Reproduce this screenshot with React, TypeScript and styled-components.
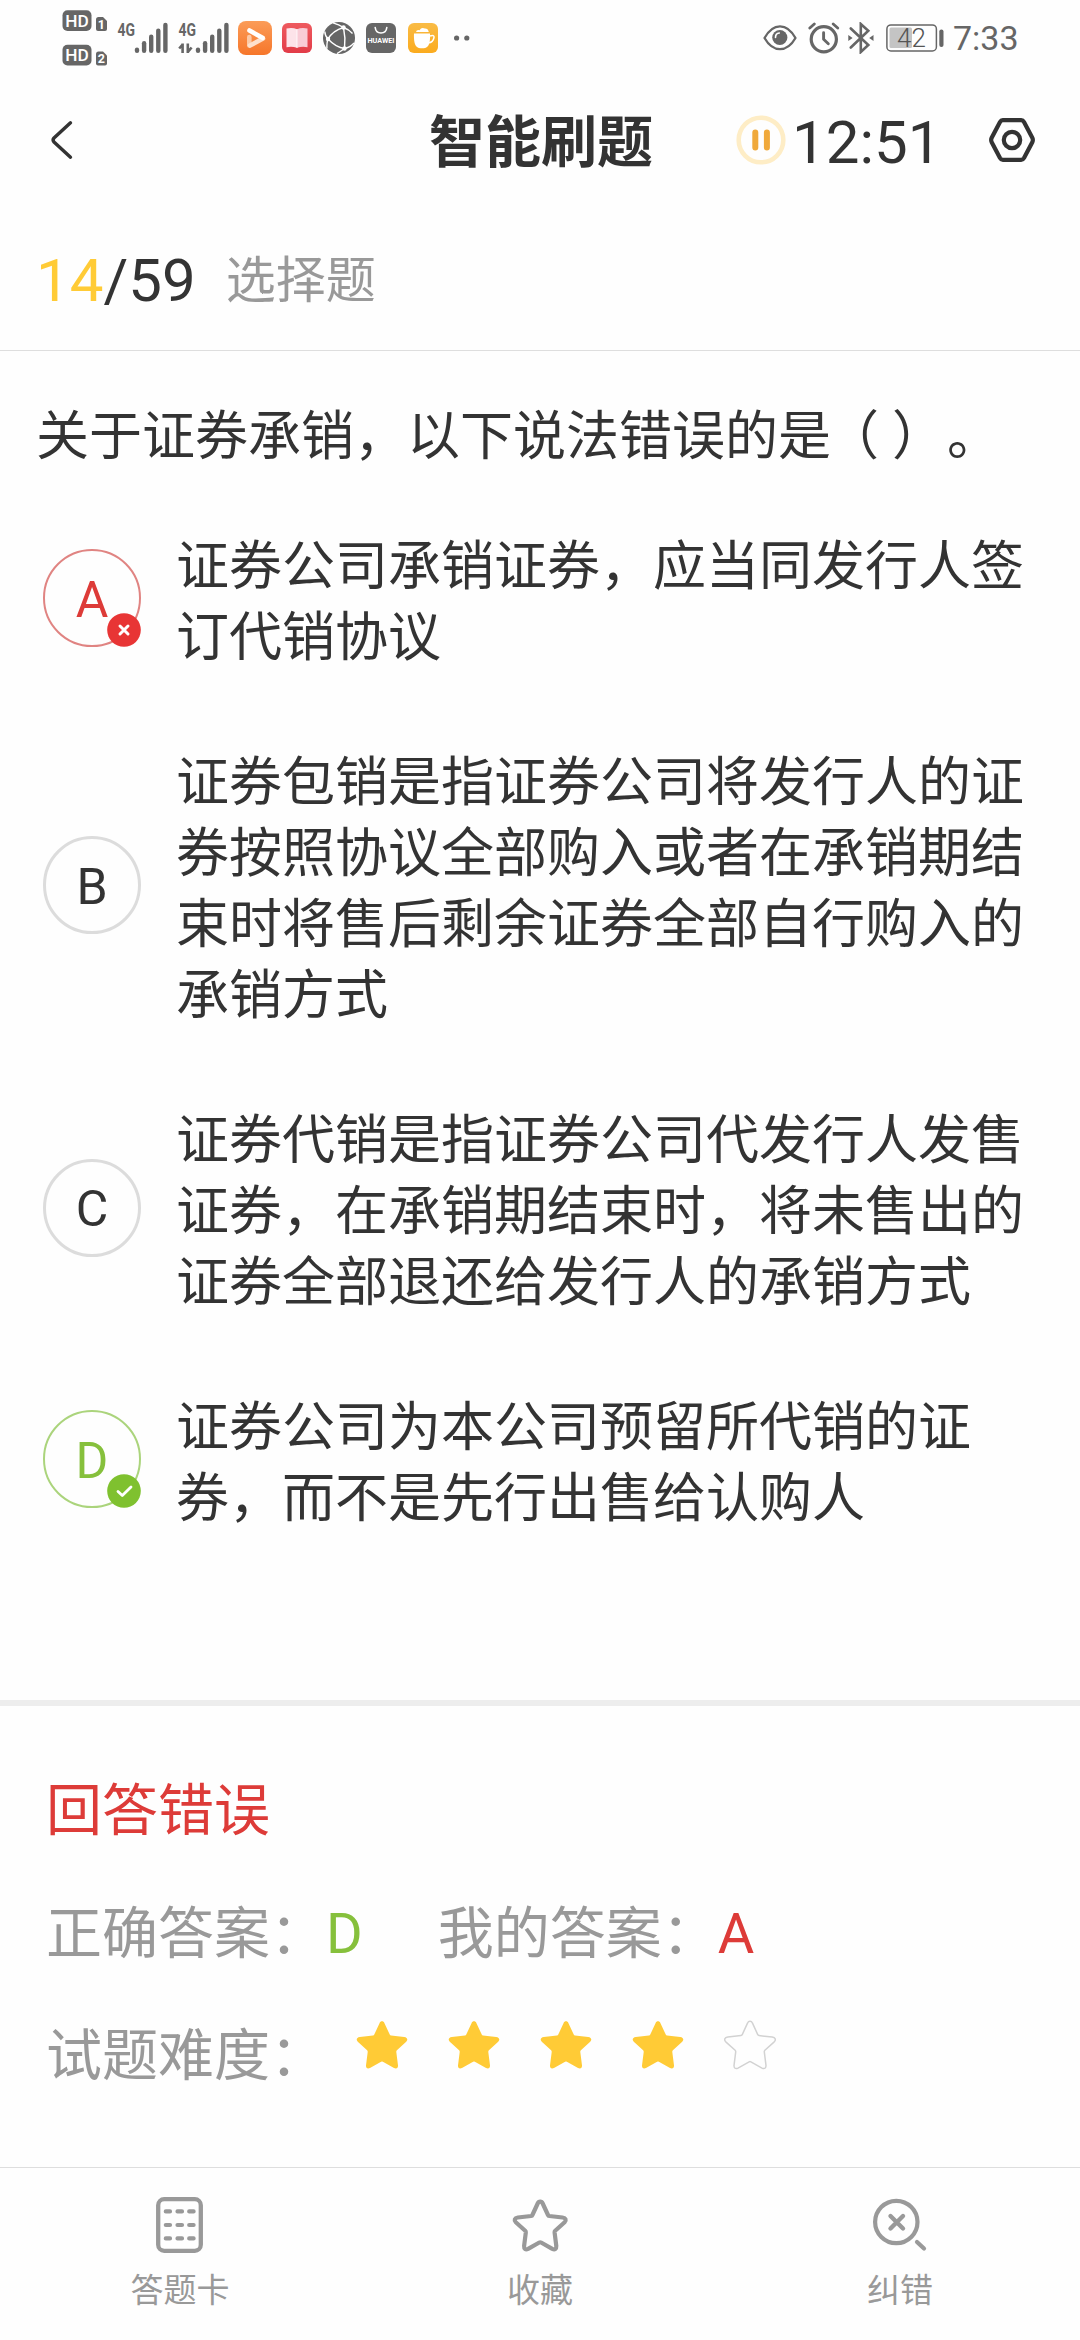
import React from "react";
import styled, { createGlobalStyle } from "styled-components";

const INK = "#333333";
const MUTED = "#999999";
const STATUS = "#666666";
const RED = "#dd3b38";
const GREEN = "#86c03c";
const YELLOW = "#ffcb36";
const FONT = `Roboto, "Noto Sans CJK SC", sans-serif`;

const GlobalStyle = createGlobalStyle`
  * { box-sizing: border-box; }
  body { margin: 0; background: #fefefe; }
`;

const Screen = styled.main`
  width: 1080px;
  height: 2340px;
  display: flex;
  flex-direction: column;
  overflow: hidden;
  background: #fefefe;
  color: ${INK};
  font-family: ${FONT};
  text-spacing-trim: space-all;
`;

/* ---------- status bar ---------- */

const StatusBar = styled.div`
  height: 75px;
  flex: none;
  display: flex;
  align-items: center;
  justify-content: space-between;
  padding: 0 61px 0 62px;
  color: ${STATUS};
`;

const StatusGroup = styled.div`
  display: flex;
  align-items: center;
`;

const Slot = styled.span<{ $gap?: number }>`
  display: flex;
  margin-left: ${(p) => p.$gap ?? 0}px;
  svg { display: block; }
`;

const Clock = styled.span`
  margin-left: 8px;
  font-size: 34px;
  line-height: 40px;
  width: 66px;
  white-space: nowrap;
`;

function HdBadges() {
  return (
    <svg width="46" height="56" viewBox="0 0 46 56" fontFamily={FONT}>
      {[0, 34.5].map((y, i) => (
        <g key={y} transform={`translate(0 ${y})`}>
          <rect x="0.5" y="0.3" width="29" height="20.6" rx="5" fill={STATUS} />
          <text x="15" y="16.6" fontSize="17" fontWeight="500" fill="#fff" textAnchor="middle" textLength="23.5" lengthAdjust="spacingAndGlyphs">HD</text>
          <path d="M34 9.5 Q34 7 36.5 7 H41 L45 11 V19 Q45 21 43 21 H36 Q34 21 34 19Z" fill={STATUS} />
          <text x="39.4" y="18.6" fontSize="12.5" fontWeight="700" fill="#fff" textAnchor="middle">{i + 1}</text>
        </g>
      ))}
    </svg>
  );
}

function Signal({ data }: { data?: boolean }) {
  return (
    <svg width="51" height="42" viewBox="0 -6 51 42" fill={STATUS} fontFamily={FONT}>
      <text x="0.5" y="13.3" fontSize="18.5" fontWeight="700" textLength="17.5" lengthAdjust="spacingAndGlyphs">4G</text>
      {[5.5, 12, 18.5, 24.5, 30.2].map((h, i) => (
        <rect key={h} x={17.8 + i * 7.1} y={30 - h} width="4.4" height={h} rx="2.2" />
      ))}
      {data && (
        <path d="M4.6 20.5 V30 M4.6 21.5 L1.2 25.5 M9.8 20.5 V30 M9.8 29 L13.6 24.5" stroke={STATUS} strokeWidth="2.6" fill="none" />
      )}
    </svg>
  );
}

function VideoApp() {
  return (
    <svg width="34" height="34" viewBox="0 0 34 34">
      <defs>
        <linearGradient id="video" x1="0" y1="0" x2="0" y2="1">
          <stop offset="0" stopColor="#fb9c58" />
          <stop offset="1" stopColor="#f6762a" />
        </linearGradient>
      </defs>
      <rect width="34" height="34" rx="8" fill="url(#video)" />
      <path d="M11.3 16 V24.5" stroke="#fcc9a5" strokeWidth="4.6" strokeLinecap="round" />
      <path d="M12 24.5 L25 17.5" stroke="#fde0cc" strokeWidth="4.6" strokeLinecap="round" />
      <path d="M11.5 9.5 L24.5 16.8" stroke="#fff" strokeWidth="4.6" strokeLinecap="round" />
    </svg>
  );
}

function BookApp() {
  return (
    <svg width="30" height="30" viewBox="0 0 30 30">
      <defs>
        <linearGradient id="book" x1="0" y1="0" x2="0" y2="1">
          <stop offset="0" stopColor="#ee5a5f" />
          <stop offset="1" stopColor="#e23c48" />
        </linearGradient>
      </defs>
      <rect width="30" height="30" rx="6" fill="url(#book)" />
      <path d="M4.5 5.5 Q10.5 4 15 6.3 V24.8 Q10 23.2 4.5 24.3Z" fill="#fde3e9" />
      <path d="M15 6.3 Q19.5 4 25.5 5.5 V24.3 Q20 23.2 15 24.8Z" fill="#f9ccd6" />
      <path d="M15 6 V25" stroke="#fff" strokeWidth="0.8" />
    </svg>
  );
}

function GlobeApp() {
  return (
    <svg width="32" height="32" viewBox="0 0 32 32">
      <circle cx="16" cy="16" r="16" fill={STATUS} />
      <g fill="none" stroke="#fff" strokeWidth="1.4">
        <path d="M10 0.9 Q16 2.5 20.5 5.5 Q26 7.5 29.5 11.5" />
        <path d="M20.5 5.5 Q10 8.5 5 17 Q13 25.5 21.5 26.5 Q22.8 16 20.5 5.5Z" />
        <path d="M5 17 Q2 14 1.8 9.5 M5 17 Q3.5 21.5 4 26.5 M21.5 26.5 Q17.5 29.5 14 31.5 M21.5 26.5 Q27 25.5 31 21" />
      </g>
      <g fill="#fff">
        <circle cx="20.5" cy="5.5" r="2.2" />
        <circle cx="5" cy="17" r="2.2" />
        <circle cx="21.5" cy="26.5" r="2.2" />
      </g>
    </svg>
  );
}

function StoreApp() {
  return (
    <svg width="30" height="30" viewBox="0 0 30 30">
      <rect width="30" height="30" rx="6" fill={STATUS} />
      <path d="M9.2 4.5 Q9.8 10 15 10 Q20.2 10 20.8 4.5" fill="none" stroke="#fff" strokeWidth="1.6" strokeLinecap="round" />
      <text x="15" y="20" fontSize="7" fontWeight="700" fontFamily={FONT} fill="#fff" textAnchor="middle" textLength="27" lengthAdjust="spacingAndGlyphs">HUAWEI</text>
    </svg>
  );
}

function CupApp() {
  return (
    <svg width="30" height="30" viewBox="0 0 30 30">
      <defs>
        <linearGradient id="cup" x1="0" y1="0" x2="0" y2="1">
          <stop offset="0" stopColor="#f9bb45" />
          <stop offset="1" stopColor="#fbab1e" />
        </linearGradient>
      </defs>
      <rect width="30" height="30" rx="6" fill="url(#cup)" />
      <path d="M6 10.5 H22 Q22.8 25.3 15.5 25.3 H12.5 Q5.2 25.3 6 10.5Z" fill="#fff" />
      <path d="M22 13 Q26.5 11.5 26 14.5 Q25 19.5 20.5 19.8" fill="none" stroke="#fff" strokeWidth="1.5" />
      <path d="M8 9 Q8.5 6.5 11.5 7.2 Q13.5 3.8 17 5.6 Q20 5.5 20.8 9Z" fill="#fff" />
    </svg>
  );
}

function MoreDots() {
  return (
    <svg width="16" height="6" viewBox="0 0 16 6" fill={STATUS}>
      <circle cx="2.6" cy="3" r="2.6" />
      <circle cx="12.8" cy="3" r="2.6" />
    </svg>
  );
}

function EyeIcon() {
  return (
    <svg width="34" height="28" viewBox="0 0 34 28">
      <path d="M1.5 14 Q8 2.3 17 2.3 Q26 2.3 32.5 14 Q26 25.2 17 25.2 Q8 25.2 1.5 14Z" fill="none" stroke={STATUS} strokeWidth="2.3" strokeLinejoin="round" />
      <circle cx="16.8" cy="13.5" r="7.6" fill={STATUS} />
      <path d="M12.5 13.5 Q12.5 9.3 16.3 9" fill="none" stroke="#fff" strokeWidth="1.6" strokeLinecap="round" />
    </svg>
  );
}

function AlarmIcon() {
  return (
    <svg width="32" height="32" viewBox="0 0 32 32" fill="none" stroke={STATUS} strokeLinecap="round">
      <circle cx="15.8" cy="17.3" r="12.6" strokeWidth="3.2" />
      <path d="M15.6 10.8 V17.3 L20.3 21.8" strokeWidth="2.9" strokeLinejoin="round" />
      <path d="M1.8 6 L6.3 2 M29.7 6 L25.2 2" strokeWidth="2.8" />
    </svg>
  );
}

function BluetoothIcon() {
  return (
    <svg width="26" height="32" viewBox="0 0 26 32">
      <path d="M2.8 6.5 L20.3 23 L12.8 30 V2 L20.3 8.8 L2.8 25.5" fill="none" stroke={STATUS} strokeWidth="2.6" strokeLinecap="round" />
      <path d="M0.3 13 L4.6 16 L0.3 19Z M25.5 13 L21.2 16 L25.5 19Z" fill={STATUS} />
    </svg>
  );
}

function BatteryIcon() {
  return (
    <svg width="59" height="28" viewBox="0 0 59 28">
      <rect x="0.9" y="0.9" width="49.5" height="26" rx="4" fill="none" stroke={STATUS} strokeWidth="1.5" />
      <rect x="3.5" y="3.5" width="22.5" height="20.5" rx="1.5" fill="#c4c4c4" />
      <text x="25.5" y="23" fontSize="26" fontWeight="300" fontFamily={FONT} fill="#555" textAnchor="middle">42</text>
      <rect x="53.3" y="5.5" width="4.2" height="17.5" rx="2" fill={STATUS} />
    </svg>
  );
}

/* ---------- header ---------- */

const Header = styled.header`
  height: 130px;
  flex: none;
  display: grid;
  grid-template-columns: 1fr auto 1fr;
  align-items: center;
  padding: 0 45px 0 46px;
`;

const IconButton = styled.button`
  display: flex;
  padding: 0;
  border: 0;
  background: none;
  svg { display: block; }
`;

const Title = styled.h1`
  margin: 0;
  padding: 6px 0 0 1px;
  font-size: 56px;
  line-height: 66px;
  font-weight: 700;
`;

const TimerGroup = styled.div`
  display: flex;
  align-items: center;
  padding-left: 83px;
`;

const Timer = styled.span`
  flex: 1;
  padding: 6px 0 0 6px;
  font-size: 60px;
  line-height: 70px;
`;

/* ---------- question ---------- */

const Progress = styled.div`
  height: 146px;
  flex: none;
  display: flex;
  align-items: center;
  padding: 6px 36px 0;
  border-bottom: 1px solid #dedede;
  font-size: 60px;
  line-height: 70px;
`;

const Current = styled.span`
  color: ${YELLOW};
`;

const Kind = styled.span`
  margin-left: 30px;
  padding-top: 1px;
  color: ${MUTED};
  font-size: 50px;
`;

const QuestionArea = styled.section`
  height: 1349px;
  flex: none;
  padding: 51px 40px 0 36px;
`;

const Stem = styled.p`
  margin: 0 0 59px;
  font-size: 53px;
  line-height: 71px;
  white-space: nowrap;
`;

/* Opens up the empty answer blank between the brackets. */
const Blank = styled.span<{ $before: number }>`
  margin-left: ${(p) => p.$before}px;
`;

const Options = styled.div`
  display: flex;
  flex-direction: column;
  gap: 74px;
`;

const Option = styled.div`
  display: flex;
  align-items: center;
`;

type Mark = "wrong" | "right" | undefined;
const markColor = (m: Mark) => (m === "wrong" ? RED : m === "right" ? GREEN : INK);

const Letter = styled.div<{ $mark: Mark }>`
  position: relative;
  top: -5px;
  width: 98px;
  height: 98px;
  flex: none;
  margin: 0 35px 0 7px;
  display: flex;
  align-items: center;
  justify-content: center;
  padding-top: 3px;
  border: ${(p) => (p.$mark ? "2px" : "3px")} solid
    ${(p) => (p.$mark === "wrong" ? "#e08482" : p.$mark === "right" ? "#abd47c" : "#dcdcdc")};
  border-radius: 50%;
  color: ${(p) => markColor(p.$mark)};
  font-size: 50px;
  line-height: 58px;
`;

const Badge = styled.svg`
  position: absolute;
  right: -2px;
  bottom: -2px;
`;

const OptionText = styled.p`
  margin: 0;
  width: 860px;
  font-size: 53px;
  line-height: 71px;
`;

const OPTIONS: { letter: string; mark?: Mark; lines: string[] }[] = [
  { letter: "A", mark: "wrong", lines: ["证券公司承销证券，应当同发行人签", "订代销协议"] },
  { letter: "B", lines: ["证券包销是指证券公司将发行人的证", "券按照协议全部购入或者在承销期结", "束时将售后剩余证券全部自行购入的", "承销方式"] },
  { letter: "C", lines: ["证券代销是指证券公司代发行人发售", "证券，在承销期结束时，将未售出的", "证券全部退还给发行人的承销方式"] },
  { letter: "D", mark: "right", lines: ["证券公司为本公司预留所代销的证", "券，而不是先行出售给认购人"] },
];

function MarkBadge({ mark }: { mark: Mark }) {
  if (!mark) return null;
  return (
    <Badge width="34" height="34" viewBox="0 0 34 34">
      <circle cx="17" cy="17" r="16.8" fill={mark === "wrong" ? "#e83535" : "#7fc12f"} />
      <path
        d={mark === "wrong" ? "M13 13 L21 21 M21 13 L13 21" : "M11 17.5 L15.3 21.5 L24 13"}
        fill="none"
        stroke="#fff"
        strokeWidth={mark === "wrong" ? 3 : 2.8}
        strokeLinecap="round"
        strokeLinejoin="round"
      />
    </Badge>
  );
}

/* ---------- result ---------- */

const Result = styled.section`
  flex: 1;
  border-top: 6px solid #ededed;
  padding: 44px 46px 0;
  font-size: 56px;
  color: ${MUTED};
`;

const ResultRow = styled.div`
  height: 122.5px;
  display: flex;
  align-items: center;
  line-height: 66px;
  white-space: nowrap;
`;

const Tone = styled.span<{ $color: string; $after?: number }>`
  color: ${(p) => p.$color};
  margin-right: ${(p) => p.$after ?? 0}px;
`;

const Stars = styled.div`
  display: flex;
  gap: 40px;
  margin-left: 30px;
  padding-bottom: 23px;
  svg { display: block; }
`;

const ROUND_STAR =
  "M23.7 3 C24.7 0.5 27.7 0.5 28.7 3 L34 14.5 Q34.3 15.4 35.3 15.5 L48.6 17 C51.8 17.4 52.6 19.8 50.6 21.8 L41.2 30.3 Q40.5 31 40.6 32 L42.3 45.5 C42.5 48.4 40.8 49.5 38.3 48.3 L27.1 42 Q26.2 41.5 25.3 42 L14.1 48.3 C11.6 49.5 9.9 48.4 10.1 45.5 L11.8 32 Q11.9 31 11.2 30.3 L1.8 21.8 C-0.2 19.8 0.6 17.4 3.8 17 L17.1 15.5 Q18.1 15.4 18.4 14.5Z";

function RatingStar({ filled }: { filled: boolean }) {
  return (
    <svg width="52" height="50" viewBox="0 0 52.4 50">
      <path d={ROUND_STAR} fill={filled ? YELLOW : "none"} stroke={filled ? "none" : "#d2d2d2"} strokeWidth="1.5" strokeLinejoin="round" />
    </svg>
  );
}

/* ---------- bottom bar ---------- */

const TabBar = styled.nav`
  height: 173px;
  flex: none;
  display: grid;
  grid-template-columns: repeat(3, 1fr);
  border-top: 1px solid #dedede;
  padding-top: 29px;
`;

const Tab = styled.div`
  display: flex;
  flex-direction: column;
  align-items: center;
  color: ${MUTED};
  font-size: 33px;
  line-height: 40px;
  svg { display: block; margin-bottom: 18px; }
`;

function CardIcon() {
  return (
    <svg width="58" height="56" viewBox="0 0 58 56" fill="none" stroke={MUTED}>
      <rect x="7.2" y="2.2" width="42.6" height="51.6" rx="6" strokeWidth="4.3" />
      <path
        d="M14.8 14.4 H19 M26.5 14.4 H31 M38.2 14.4 H42.6 M14.8 28 H19 M26.5 28 H31 M38.2 28 H42.6 M14.8 41.4 H19 M26.5 41.4 H31 M38.2 41.4 H42.6"
        strokeWidth="4.2"
        strokeLinecap="round"
      />
    </svg>
  );
}

function FavoriteIcon() {
  return (
    <svg width="58" height="56" viewBox="-3 -3.5 58 56" fill="none" stroke={MUTED}>
      <path d={ROUND_STAR} strokeWidth="4.2" strokeLinejoin="round" />
    </svg>
  );
}

function ReportIcon() {
  return (
    <svg width="58" height="56" viewBox="0 0 58 56" fill="none" stroke={MUTED} strokeLinecap="round">
      <circle cx="25.3" cy="25" r="21.2" strokeWidth="4.2" />
      <path d="M19.5 19 L32 31.5 M32 19 L19.5 31.5" strokeWidth="4.4" />
      <path d="M46 45 L53 51.5" strokeWidth="4.2" />
    </svg>
  );
}

export default function App() {
  return (
    <Screen lang="zh-CN">
      <GlobalStyle />
      <StatusBar>
        <StatusGroup>
          <Slot><HdBadges /></Slot>
          <Slot $gap={9}><Signal /></Slot>
          <Slot $gap={10}><Signal data /></Slot>
          <Slot $gap={9}><VideoApp /></Slot>
          <Slot $gap={10}><BookApp /></Slot>
          <Slot $gap={11}><GlobeApp /></Slot>
          <Slot $gap={11}><StoreApp /></Slot>
          <Slot $gap={12}><CupApp /></Slot>
          <Slot $gap={16}><MoreDots /></Slot>
        </StatusGroup>
        <StatusGroup>
          <Slot><EyeIcon /></Slot>
          <Slot $gap={11}><AlarmIcon /></Slot>
          <Slot $gap={8}><BluetoothIcon /></Slot>
          <Slot $gap={12}><BatteryIcon /></Slot>
          <Clock>7:33</Clock>
        </StatusGroup>
      </StatusBar>

      <Header>
        <IconButton aria-label="返回">
          <svg width="30" height="40" viewBox="0 0 30 40" fill="none" stroke={INK} strokeWidth="3.4" strokeLinecap="round">
            <path d="M24.5 2.8 L8 18 Q6.2 20 8 22 L24.5 37.2" />
          </svg>
        </IconButton>
        <Title>智能刷题</Title>
        <TimerGroup>
          <svg width="50" height="50" viewBox="0 0 50 50">
            <circle cx="25" cy="25" r="22.3" fill="none" stroke="#feedc6" strokeWidth="4.6" />
            <path d="M19.3 17.5 V32.5 M30.9 17.5 V32.5" stroke="#f0a93b" strokeWidth="6" strokeLinecap="round" />
          </svg>
          <Timer>12:51</Timer>
          <IconButton aria-label="设置">
            <svg width="46" height="44" viewBox="0 0 46 44" fill="none" stroke={INK} strokeWidth="4.2" strokeLinejoin="round">
              <path d="M13.8 2.2 H32.2 Q34 2.2 35 4 L43.3 19.8 Q44.4 22 43.3 24.2 L35 40 Q34 41.8 32.2 41.8 H13.8 Q12 41.8 11 40 L2.7 24.2 Q1.6 22 2.7 19.8 L11 4 Q12 2.2 13.8 2.2Z" />
              <circle cx="23" cy="22" r="8.2" />
            </svg>
          </IconButton>
        </TimerGroup>
      </Header>

      <Progress>
        <Current>14</Current>/59<Kind>选择题</Kind>
      </Progress>

      <QuestionArea>
        <Stem>
          关于证券承销，以下说法错误的是<Blank $before={-5}>（</Blank><Blank $before={13}>）</Blank><Blank $before={2}>。</Blank>
        </Stem>
        <Options>
          {OPTIONS.map((o) => (
            <Option key={o.letter}>
              <Letter $mark={o.mark}>
                {o.letter}
                <MarkBadge mark={o.mark} />
              </Letter>
              <OptionText>
                {o.lines.map((line, i) => (
                  <React.Fragment key={line}>
                    {i > 0 && <br />}
                    {line}
                  </React.Fragment>
                ))}
              </OptionText>
            </Option>
          ))}
        </Options>
      </QuestionArea>

      <Result>
        <ResultRow><Tone $color={RED}>回答错误</Tone></ResultRow>
        <ResultRow>
          正确答案：<Tone $color={GREEN} $after={75}>D</Tone>
          我的答案：<Tone $color={RED}>A</Tone>
        </ResultRow>
        <ResultRow>
          试题难度：
          <Stars>
            {[1, 2, 3, 4, 5].map((n) => (
              <RatingStar key={n} filled={n <= 4} />
            ))}
          </Stars>
        </ResultRow>
      </Result>

      <TabBar>
        <Tab><CardIcon />答题卡</Tab>
        <Tab><FavoriteIcon />收藏</Tab>
        <Tab><ReportIcon />纠错</Tab>
      </TabBar>
    </Screen>
  );
}
